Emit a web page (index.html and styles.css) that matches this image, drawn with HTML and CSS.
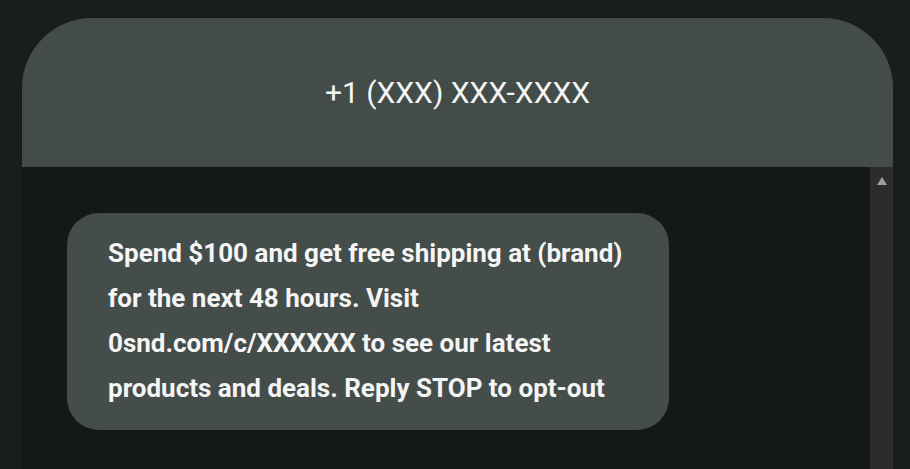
FILE: index.html
```html
<!DOCTYPE html>
<html lang="en">
<head>
    <meta charset="UTF-8">
    <meta name="viewport" content="width=device-width, initial-scale=1.0">
    <title>Message preview</title>
    <link rel="stylesheet" href="styles.css">
</head>
<body>
    <div class="telefono">
        <header class="cabecera">
            <h1 class="numero">+1 (XXX) XXX-XXXX</h1>
        </header>
        <section class="conversacion">
            <div class="mensajes">
                <p class="burbuja">Spend $100 and get free shipping at (brand) for the next 48 hours. Visit 0snd.com/c/XXXXXX to see our latest products and deals. Reply STOP to opt-out</p>
            </div>
            <div class="scroll">
                <span class="flecha"></span>
            </div>
        </section>
    </div>
</body>
</html>
```

FILE: styles.css
```css
html, body{
    margin: 0;
    height: 100%;
    overflow: hidden;
}
body{
    background: #191d1c;
    font-family: Roboto, "Liberation Sans", sans-serif;
    color: #f4f5f4;
    padding: 18px 17px 0 22px;
    box-sizing: border-box;
}
.telefono{
    width: 871px;
    height: 100%;
    display: flex;
    flex-direction: column;
}
.cabecera{
    height: 149px;
    background: #444c4a;
    border-radius: 70px 70px 0 0;
    display: flex;
    align-items: center;
    justify-content: center;
    flex-shrink: 0;
}
.numero{
    margin: 0;
    font-size: 30px;
    font-weight: 400;
}
.conversacion{
    flex: 1;
    display: flex;
    background: #141817;
}
.mensajes{
    flex: 1;
    padding: 46px 0 0 45px;
}
.burbuja{
    margin: 0;
    width: 602px;
    box-sizing: border-box;
    padding: 18px 40px 19px 41px;
    background: #454d4b;
    border-radius: 32px;
    font-size: 26px;
    font-weight: 700;
    line-height: 45px;
}
.scroll{
    width: 23px;
    background: #2c2c2c;
    display: flex;
    justify-content: center;
    padding-top: 10px;
    box-sizing: border-box;
}
.flecha{
    width: 0;
    height: 0;
    border-left: 5.5px solid transparent;
    border-right: 5.5px solid transparent;
    border-bottom: 8px solid #9e9e9e;
}
```
